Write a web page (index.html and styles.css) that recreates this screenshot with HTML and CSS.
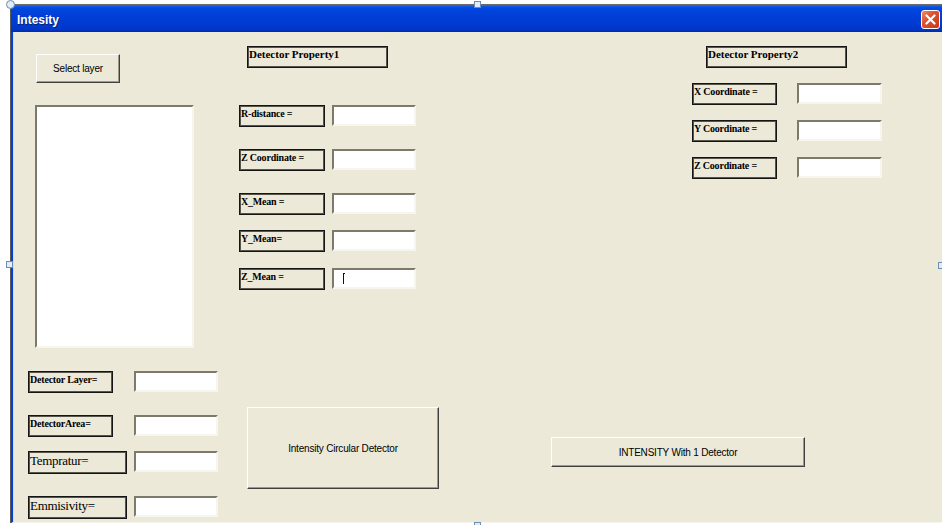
FILE: index.html
```html
<!DOCTYPE html>
<html lang="en">
<head>
  <meta charset="UTF-8">
  <title>Intesity</title>
  <link rel="stylesheet" href="styles.css">
</head>
<body>

  <div class="window">
    <div class="titlebar">
      <span class="title">Intesity</span>
      <span class="close">
        <svg width="11" height="11" viewBox="0 0 11 11">
          <path d="M1.5 1.5 L9.5 9.5 M9.5 1.5 L1.5 9.5" stroke="#fff" stroke-width="2.2" stroke-linecap="round"/>
        </svg>
      </span>
    </div>

    <div class="form">
      <!-- colonne gauche -->
      <div class="col col-left">
        <div class="btn btn-select">Select layer</div>
        <div class="listbox"></div>

        <div class="field f-layer">
          <span class="lbl">Detector Layer=</span>
          <span class="txt"></span>
        </div>
        <div class="field f-area">
          <span class="lbl">DetectorArea=</span>
          <span class="txt"></span>
        </div>
        <div class="field f-temp big">
          <span class="lbl">Tempratur=</span>
          <span class="txt"></span>
        </div>
        <div class="field f-emm big">
          <span class="lbl">Emmisivity=</span>
          <span class="txt"></span>
        </div>
      </div>

      <!-- colonne du milieu -->
      <div class="col col-mid">
        <div class="header">Detector Property1</div>

        <div class="field f-r">
          <span class="lbl">R-distance =</span>
          <span class="txt"></span>
        </div>
        <div class="field f-z">
          <span class="lbl">Z Coordinate =</span>
          <span class="txt"></span>
        </div>
        <div class="field f-xm">
          <span class="lbl">X_Mean =</span>
          <span class="txt"></span>
        </div>
        <div class="field f-ym">
          <span class="lbl">Y_Mean=</span>
          <span class="txt"></span>
        </div>
        <div class="field f-zm">
          <span class="lbl">Z_Mean =</span>
          <span class="txt"><span class="caret"></span></span>
        </div>

        <div class="btn btn-circular">Intensity Circular Detector</div>
      </div>

      <!-- colonne droite -->
      <div class="col col-right">
        <div class="header">Detector Property2</div>

        <div class="field">
          <span class="lbl">X Coordinate =</span>
          <span class="txt"></span>
        </div>
        <div class="field">
          <span class="lbl">Y Coordinate =</span>
          <span class="txt"></span>
        </div>
        <div class="field">
          <span class="lbl">Z Coordinate =</span>
          <span class="txt"></span>
        </div>

        <div class="btn btn-one">INTENSITY With 1 Detector</div>
      </div>
    </div>
  </div>

  <!-- poignées de sélection du concepteur -->
  <span class="handle round h-tl"></span>
  <span class="handle h-tc"></span>
  <span class="handle h-ml"></span>
  <span class="handle h-mr"></span>
  <span class="handle h-bc"></span>

</body>
</html>
```

FILE: styles.css
```css
body {
  margin: 0;
  background-color: #fff;
  font-family: "Liberation Serif", "Times New Roman", serif;
  overflow: hidden;
  height: 525px;
  position: relative;
}

.window {
  margin: 4px 0 0 10px;
  width: 931px;
  border-top: 1px solid #6a6a6a;
  border-left: 1px solid #5a5a5a;
}

.titlebar {
  height: 27px;
  display: flex;
  align-items: center;
  justify-content: space-between;
  padding: 0 2px 0 6px;
  background: linear-gradient(#2c6cf0 0, #0450e6 2px, #0044dc 5px, #003cd4 60%, #0036c8 90%, #002aa8 100%);
}

.title {
  color: #fff;
  font-family: "Liberation Sans", Arial, sans-serif;
  font-size: 12px;
  font-weight: bold;
  padding-top: 3px;
  text-shadow: 1px 1px 0 #0a2470;
}

.close {
  width: 19px;
  height: 19px;
  margin-top: 1px;
  box-sizing: border-box;
  border: 1px solid #fff;
  border-radius: 3px;
  background: linear-gradient(135deg, #f08a6a 0, #e0502c 40%, #c63a18 100%);
  display: flex;
  align-items: center;
  justify-content: center;
}

.form {
  height: 490px;
  display: flex;
  background-color: #ece9d8;
  border-left: 2px solid #0040d4;
  box-shadow: inset 1px 0 0 #d4def2;
  border-bottom: 1px solid #f7f6ee;
  padding-left: 1px;
}

.col {
  display: flex;
  flex-direction: column;
}

.col-left {
  margin-left: 14px;
  width: 190px;
}

.col-mid {
  margin-left: 21px;
  width: 200px;
}

.col-right {
  margin-left: 112px;
  width: 331px;
}

/* boutons en relief */
.btn {
  box-sizing: border-box;
  display: flex;
  align-items: center;
  justify-content: center;
  font-family: "Liberation Sans", Arial, sans-serif;
  font-size: 10px;
  letter-spacing: -0.2px;
  color: #000;
  background-color: #ece9d8;
  border: 1px solid;
  border-color: #fff #404040 #404040 #fff;
  box-shadow: inset -1px -1px 0 #9d9a8c;
}

.btn-select {
  margin: 22px 0 0 8px;
  width: 84px;
  height: 29px;
}

.btn-circular {
  margin: 117px 0 0 8px;
  width: 192px;
  height: 82px;
  padding-top: 1px;
}

.btn-one {
  margin-top: 258px;
  width: 254px;
  height: 30px;
}

.listbox {
  margin: 22px 0 0 7px;
  width: 159px;
  height: 243px;
  box-sizing: border-box;
  background-color: #fff;
  border: 2px solid;
  border-color: #7d7a6c #f6f5ef #f6f5ef #7d7a6c;
}

/* libellés et zones de texte */
.field {
  display: flex;
  justify-content: space-between;
  height: 22px;
}

.lbl {
  box-sizing: border-box;
  height: 100%;
  border: 1px solid #151515;
  box-shadow: inset 0 0 0 1px #55554c;
  padding: 2px 0 0 1px;
  font-size: 10px;
  font-weight: bold;
  line-height: 12px;
  white-space: nowrap;
  overflow: hidden;
  letter-spacing: -0.2px;
}

.txt {
  box-sizing: border-box;
  height: 21px;
  background-color: #fff;
  border: 2px solid;
  border-color: #7d7a6c #f6f5ef #f6f5ef #7d7a6c;
  position: relative;
}

.caret {
  position: absolute;
  left: 9px;
  top: 3px;
  width: 2px;
  height: 11px;
  border-left: 1px solid #111;
  border-top: 1px solid #111;
  box-sizing: border-box;
}

.header {
  box-sizing: border-box;
  width: 141px;
  height: 22px;
  border: 1px solid #151515;
  box-shadow: inset 0 0 0 1px #55554c;
  padding: 1px 0 0 1px;
  font-size: 11px;
  font-weight: bold;
  line-height: 13px;
}

/* gauche */
.col-left .lbl { width: 85px; }
.col-left .txt { width: 84px; }
.col-left .big .lbl {
  width: 99px;
  font-size: 13px;
  font-weight: normal;
  line-height: 15px;
  padding-top: 1px;
  letter-spacing: -0.3px;
}
.col-left .big { height: 23px; }
.f-layer { margin-top: 23px; }
.f-area { margin-top: 22px; }
.f-temp { margin-top: 14px; }
.f-emm { margin-top: 22px; }

/* milieu */
.col-mid .header { margin: 14px 0 0 8px; }
.col-mid .field { width: 177px; }
.col-mid .lbl { width: 86px; }
.col-mid .txt { width: 84px; }
.f-r { margin-top: 37px; }
.f-z { margin-top: 22px; }
.f-xm { margin-top: 22px; }
.f-ym { margin-top: 15px; }
.f-zm { margin-top: 16px; }

/* droite */
.col-right .header { margin: 14px 0 0 155px; }
.col-right .field {
  margin: 15px 0 0 141px;
  width: 190px;
}
.col-right .lbl { width: 85px; }
.col-right .txt { width: 85px; }

/* poignées */
.handle {
  position: absolute;
  width: 7px;
  height: 7px;
  box-sizing: border-box;
  background-color: #e2ecf8;
  border: 1px solid #6d8db3;
}

.handle.round {
  width: 9px;
  height: 9px;
  border-radius: 50%;
}

.h-tl { left: 6px; top: 0; }
.h-tc { left: 474px; top: 1px; }
.h-ml { left: 6px; top: 261px; }
.h-mr { left: 938px; top: 262px; }
.h-bc { left: 474px; top: 522px; }
```
